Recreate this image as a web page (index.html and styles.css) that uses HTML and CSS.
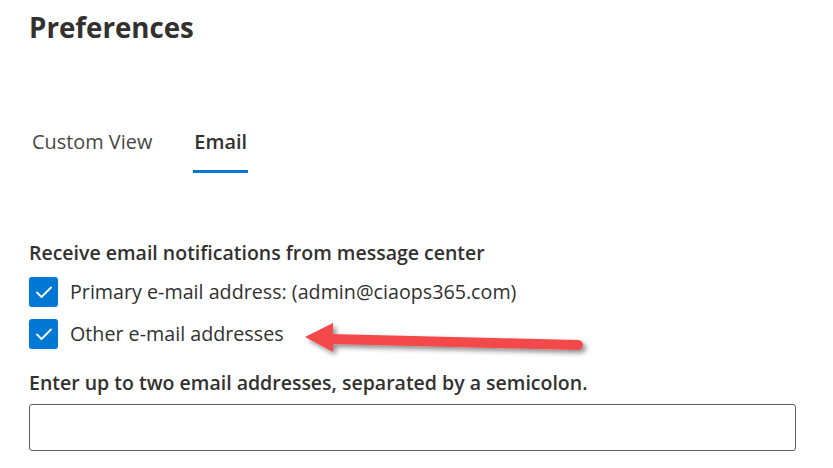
FILE: index.html
```html
<!DOCTYPE html>
<html>
<head>
<meta charset="utf-8">
<link rel="stylesheet" href="styles.css">
</head>
<body>
<div class="page">
  <h1 class="title">Preferences</h1>
  <div class="tabs">
    <div class="tab">Custom View</div>
    <div class="tab active">Email</div>
  </div>
  <div class="section">
    <div class="label">Receive email notifications from message center</div>
    <label class="check">
      <span class="box"><svg viewBox="0 0 28 28" width="28" height="28"><path d="M7 14.5l4.5 4.5 9.5-9.5" fill="none" stroke="#fff" stroke-width="1.8" stroke-linecap="round" stroke-linejoin="round"/></svg></span>
      <span class="check-text">Primary e-mail address: (admin@ciaops365.com)</span>
    </label>
    <label class="check">
      <span class="box"><svg viewBox="0 0 28 28" width="28" height="28"><path d="M7 14.5l4.5 4.5 9.5-9.5" fill="none" stroke="#fff" stroke-width="1.8" stroke-linecap="round" stroke-linejoin="round"/></svg></span>
      <span class="check-text">Other e-mail addresses</span>
    </label>
    <div class="label label-input">Enter up to two email addresses, separated by a semicolon.</div>
    <div class="input"></div>
  </div>
  <svg class="arrow" width="320" height="60" viewBox="0 0 320 60">
    <defs>
      <filter id="sh" x="-20%" y="-50%" width="140%" height="200%">
        <feGaussianBlur in="SourceAlpha" stdDeviation="2.5"/>
        <feOffset dx="3" dy="3" result="b"/>
        <feComponentTransfer><feFuncA type="linear" slope="0.45"/></feComponentTransfer>
        <feMerge><feMergeNode/><feMergeNode in="SourceGraphic"/></feMerge>
      </filter>
    </defs>
    <g filter="url(#sh)">
      <path d="M30 19 L278 25" stroke="#f34a4c" stroke-width="10" stroke-linecap="round" fill="none"/>
      <path d="M5 17 L33 3 L33 32 Z" fill="#f34a4c"/>
    </g>
  </svg>
</div>
</body>
</html>
```
FILE: styles.css
```css
html, body {
  margin: 0;
  padding: 0;
  background: #fff;
}
.page {
  position: relative;
  width: 833px;
  height: 468px;
  overflow: hidden;
  padding-left: 29px;
  box-sizing: border-box;
  font-family: "Open Sans", "Noto Sans", sans-serif;
  color: #323130;
}
.title {
  margin: 0;
  padding-top: 7px;
  font-size: 27.7px;
  line-height: 40px;
  font-weight: 700;
}
.tabs {
  display: flex;
  gap: 41px;
  margin-top: 80px;
  padding-left: 3px;
}
.tab {
  font-size: 19.9px;
  line-height: 30px;
  color: #484644;
  padding-bottom: 13px;
  border-bottom: 3px solid transparent;
}
.tab.active {
  color: #323130;
  font-weight: 600;
  border-bottom-color: #0078d4;
  padding-left: 1px;
  padding-right: 1px;
}
.section {
  margin-top: 67px;
}
.label {
  font-size: 19.5px;
  line-height: 26px;
  font-weight: 600;
}
.check {
  display: flex;
  align-items: center;
  gap: 12px;
  margin-top: 11px;
}
.check + .check {
  margin-top: 12px;
}
.box {
  width: 29px;
  height: 30px;
  background: #0078d4;
  border-radius: 3px;
  display: flex;
  align-items: center;
  justify-content: center;
}
.check-text {
  font-size: 19.7px;
  line-height: 28px;
  color: #323130;
}
.label-input {
  margin-top: 21px;
}
.input {
  margin-top: 8px;
  width: 767px;
  height: 47px;
  box-sizing: border-box;
  border: 1px solid #605e5c;
  border-radius: 3px;
}
.arrow {
  position: absolute;
  left: 300px;
  top: 320px;
}
```
